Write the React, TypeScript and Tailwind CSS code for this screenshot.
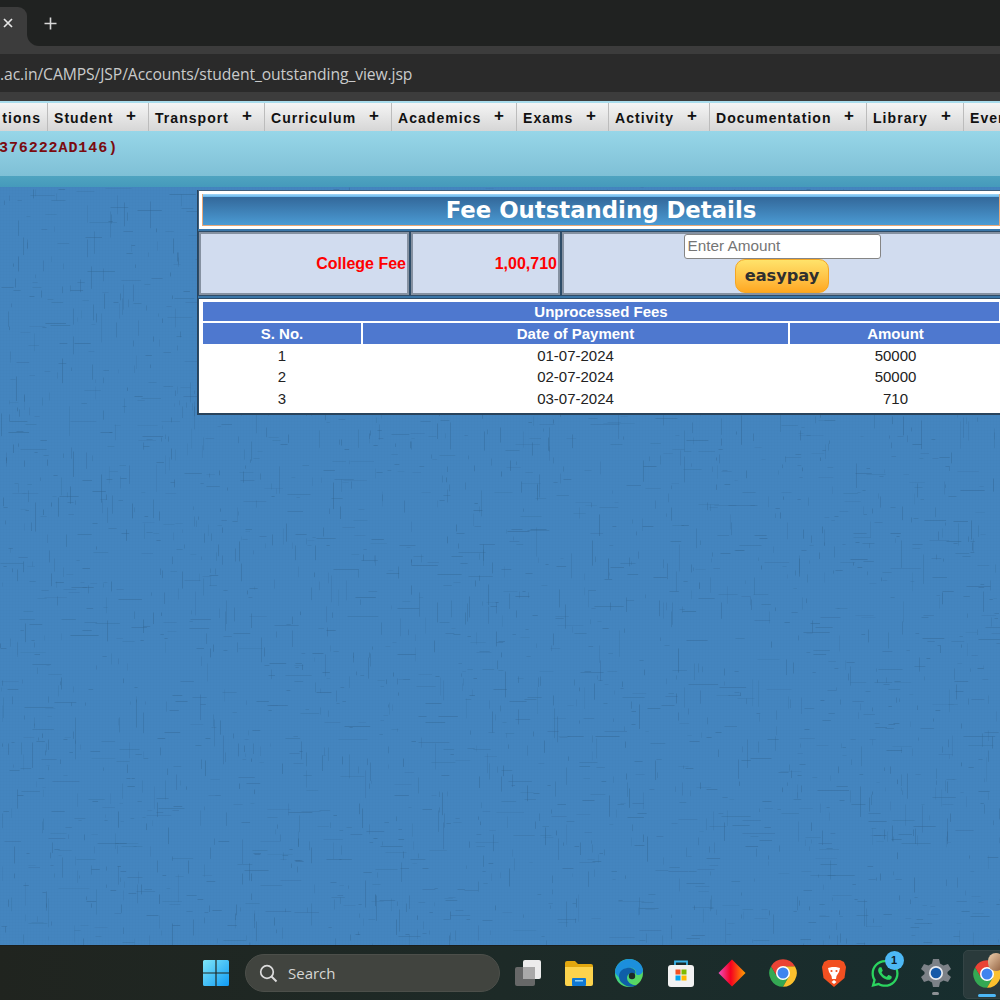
import React from "react";
import { FaWhatsapp } from "react-icons/fa";

const menu: [string, number][] = [
  ["Student", 101],
  ["Transport", 116],
  ["Curriculum", 127],
  ["Academics", 125],
  ["Exams", 92],
  ["Activity", 101],
  ["Documentation", 157],
  ["Library", 97],
];

function Texture() {
  const lines: React.ReactNode[] = [];
  let s = 12345;
  const r = () => {
    s = (s * 1103515245 + 12345) & 0x7fffffff;
    return s / 0x7fffffff;
  };
  for (let i = 0; i < 3200; i++) {
    const x = Math.floor(r() * 1000) + 0.5;
    const y = Math.floor(r() * 760) + 0.5;
    const l = 3 + r() * r() * 30;
    const h = r() > 0.5;
    lines.push(
      <line key={i} x1={x} y1={y} x2={h ? x + l : x} y2={h ? y : y + l} stroke="#30618c" strokeOpacity={0.12 + r() * 0.28} strokeWidth={1} />
    );
  }
  return (
    <svg className="absolute inset-0 w-full h-full" viewBox="0 0 1000 758" preserveAspectRatio="none">
      <defs>
        <pattern id="weave" width="3" height="3" patternUnits="userSpaceOnUse">
          <rect width="1" height="3" fill="#2f6496" fillOpacity="0.04" />
          <rect width="3" height="1" fill="#2f6496" fillOpacity="0.04" />
        </pattern>
      </defs>
      <rect width="1000" height="758" fill="url(#weave)" />
      {lines}
    </svg>
  );
}

function Chrome({ size = 30 }: { size?: number }) {
  return (
    <svg width={size} height={size} viewBox="0 0 24 24">
      <path d="M12 23A11 11 0 0 1 2.47 6.5L7.24 14.75L16.76 14.75Z" fill="#34a853" />
      <path d="M21.53 6.5A11 11 0 0 1 12 23L16.76 14.75L12 6.5Z" fill="#fbc02d" />
      <path d="M2.47 6.5A11 11 0 0 1 21.53 6.5L12 6.5L7.24 14.75Z" fill="#ea4335" />
      <circle cx="12" cy="12" r="5.6" fill="#fff" />
      <circle cx="12" cy="12" r="4.4" fill="#3f84ee" />
    </svg>
  );
}

function TaskItem({ children }: { children: React.ReactNode }) {
  return <div className="w-[51px] h-full flex items-center justify-center shrink-0">{children}</div>;
}

export default function App() {
  return (
    <div className="w-[1000px] h-[1000px] overflow-hidden flex flex-col font-['Liberation_Sans',sans-serif]">
      {/* tab strip */}
      <div className="h-[46px] flex shrink-0 bg-[#202221]">
        <div className="w-[27px] pt-[7px]">
          <div className="h-full bg-[#3c3c3c] rounded-tr-[9px] flex items-start pt-[7px] pl-[1px] text-[#e8e8e8]">
            <svg width="14" height="18" viewBox="0 0 14 18">
              <path d="M3 5L11 13M11 5L3 13" stroke="#e6e6e6" strokeWidth="1.7" />
            </svg>
          </div>
        </div>
        <div className="flex-1 bg-[#3c3c3c]">
          <div className="h-full bg-[#202221] rounded-bl-[12px] flex items-center pl-[17px]">
            <svg width="13" height="13" viewBox="0 0 13 13">
              <path d="M6.5 0.5V12.5M0.5 6.5H12.5" stroke="#d8d8d8" strokeWidth="1.6" />
            </svg>
          </div>
        </div>
      </div>
      <div className="h-[8px] bg-[#3c3c3c] shrink-0" />
      {/* address bar */}
      <div className="h-[38px] bg-[#2a2a2a] shrink-0 flex items-center pt-[3px] text-[15.7px] text-[#c9cacb] font-['Open_Sans',sans-serif] tracking-[-0.1px]">
        .ac.in/CAMPS/JSP/Accounts/student_outstanding_view.jsp
      </div>
      <div className="h-[9px] bg-[#3c3c3c] shrink-0" />

      {/* menu */}
      <div className="h-[30px] shrink-0 pt-[2px] bg-[#a9dcec] flex overflow-hidden">
        <div className="w-[48px] shrink-0 border-r border-[#bcbcbc] bg-gradient-to-b from-[#f5f5f5] to-[#d6d6d6] flex items-center justify-end pr-[6px] text-[14px] font-bold tracking-[1.05px] text-[#111]">
          <span className="mt-[2px]">tions</span>
        </div>
        {menu.map(([label, w]) => (
          <div
            key={label}
            style={{ width: w }}
            className="shrink-0 border-r border-[#bcbcbc] bg-gradient-to-b from-[#f5f5f5] to-[#d6d6d6] flex items-center justify-between pl-[6px] pr-[12px] text-[14px] font-bold tracking-[1.05px] text-[#111]"
          >
            <span className="mt-[2px]">{label}</span>
            <span className="text-[17px] leading-none -mt-[3px] tracking-normal">+</span>
          </div>
        ))}
        <div className="flex-1 bg-gradient-to-b from-[#f5f5f5] to-[#d6d6d6] flex items-center pl-[6px] text-[14px] font-bold tracking-[1.05px] text-[#111] whitespace-nowrap">
          <span className="mt-[2px]">Events</span>
        </div>
      </div>

      {/* student banner */}
      <div className="h-[45px] shrink-0 bg-gradient-to-b from-[#97d6e8] to-[#7fc0d6] pt-[9px] -ml-[1px] font-['Liberation_Mono',monospace] font-bold text-[15px] leading-[17px] tracking-[0.92px] text-[#7b0a0f]">
        376222AD146)
      </div>
      <div className="h-[11px] shrink-0 bg-gradient-to-b from-[#4fa3c0] to-[#459abb]" />

      {/* main */}
      <div className="relative flex-1 bg-[#4485bf] overflow-hidden pl-[197px] pt-[3px]">
        <Texture />
        <div className="relative w-[805px] border-l border-b-2 border-[#28435c] flex flex-col gap-[2px] bg-[#3a76a8]">
          {/* title */}
          <div className="h-[39px] bg-white border-t border-l border-[#3f5f7c] pl-[3px] pr-[2px] pt-[3px] pb-[3px]">
            <div className="h-[32px] border-l border-r border-b border-[#e9a878]">
              <div className="h-[3px] bg-gradient-to-b from-[#a3d8f8] to-[#61b2ea]" />
              <div className="h-[28px] pb-[2px] bg-gradient-to-b from-[#33689a] to-[#4b9bd4] flex items-center justify-center text-white font-bold text-[22.8px] font-['DejaVu_Sans',sans-serif]">
                Fee Outstanding Details
              </div>
            </div>
          </div>
          {/* fee row */}
          <div className="h-[65px] flex gap-[2px] bg-[#2d4c68] pt-[1px] pb-[1px] text-[16px] font-bold text-[#ff0000]">
            <div className="w-[210px] ml-[1px] bg-[#d1dcef] border-2 border-[#8591a1] flex items-center justify-end pr-[1px]">
              College Fee
            </div>
            <div className="w-[149px] bg-[#d1dcef] border-2 border-[#8591a1] flex items-center justify-end pr-[1px]">
              1,00,710
            </div>
            <div className="flex-1 bg-[#d1dcef] border-2 border-l-[#8591a1] border-y-[#8591a1] border-r-0 pr-[2px] flex flex-col items-center">
              <div className="w-[197px] h-[25px] bg-white border border-[#858585] rounded-[3px] flex items-center pl-[3px] text-[15.3px] font-normal text-[#757575]">
                Enter Amount
              </div>
              <div className="w-[94px] h-[35px] rounded-[10px] border border-[#f5a623] bg-gradient-to-b from-[#ffe36a] to-[#ffa81f] flex items-center justify-center text-[#2f2f2f] font-bold text-[16.2px] font-['DejaVu_Sans',sans-serif]">
                easypay
              </div>
            </div>
          </div>
          {/* table */}
          <div className="bg-white border-t border-l border-[#2d4c68] pt-[3px] pl-[4px] pr-[1px] pb-[4px] flex flex-col text-[15px] leading-none text-[#222]">
            <div className="h-[19px] mr-[2px] bg-[#4e78cf] flex items-center justify-center text-white font-bold">
              Unprocessed Fees
            </div>
            <div className="mt-[2px] h-[21px] grid grid-cols-[158px_425px_1fr] gap-[2px] text-white font-bold">
              <div className="bg-[#4e78cf] flex items-center justify-center pb-[1px]">S. No.</div>
              <div className="bg-[#4e78cf] flex items-center justify-center pb-[1px]">Date of Payment</div>
              <div className="bg-[#4e78cf] flex items-center justify-center pb-[1px]">Amount</div>
            </div>
            {[
              ["1", "01-07-2024", "50000", "h-[22px]"],
              ["2", "02-07-2024", "50000", "h-[21px]"],
              ["3", "03-07-2024", "710", "h-[22px]"],
            ].map((row) => (
              <div key={row[0]} className={row[3] + " grid grid-cols-[158px_425px_1fr] gap-[2px] items-center text-center"}>
                <div>{row[0]}</div>
                <div>{row[1]}</div>
                <div>{row[2]}</div>
              </div>
            ))}
          </div>
        </div>
      </div>

      {/* taskbar */}
      <div className="h-[55px] shrink-0 border-t border-[#1a1e1d] bg-gradient-to-r from-[#20241f] via-[#1d2a27] to-[#172e2f] flex items-center pl-[190px]">
        <TaskItem>
          <svg width="28" height="28" viewBox="0 0 28 28">
            <defs>
              <linearGradient id="win" x1="0" y1="0" x2="1" y2="1">
                <stop offset="0" stopColor="#7fe6f8" />
                <stop offset="1" stopColor="#0f9bf5" />
              </linearGradient>
            </defs>
            <path d="M1 2.5A1.5 1.5 0 0 1 2.5 1H13.4V13.4H1ZM14.6 1H25.5A1.5 1.5 0 0 1 27 2.5V13.4H14.6ZM1 14.6H13.4V27H2.5A1.5 1.5 0 0 1 1 25.5ZM14.6 14.6H27V25.5A1.5 1.5 0 0 1 25.5 27H14.6Z" fill="url(#win)" />
          </svg>
        </TaskItem>
        <div className="ml-[4px] mr-[2px] w-[255px] h-[38px] shrink-0 rounded-full bg-[#41443f] border border-[#4c4f4a] flex items-center pl-[13px] gap-[10px] text-[15px] text-[#d6d6d4] font-['Open_Sans',sans-serif]">
          <svg width="19" height="19" viewBox="0 0 19 19" fill="none">
            <circle cx="8" cy="8" r="6.3" stroke="#dcdcdc" strokeWidth="1.7" />
            <path d="M12.5 12.5L17.5 17.5" stroke="#dcdcdc" strokeWidth="1.9" />
          </svg>
          Search
        </div>
        <TaskItem>
          <svg width="28" height="28" viewBox="0 0 28 28">
            <rect x="9" y="1" width="18" height="19" rx="2" fill="#ececec" />
            <rect x="1" y="8" width="20" height="19" rx="2" fill="#6c6c6c" fillOpacity="0.95" />
            <rect x="9" y="8" width="12" height="12" fill="#a9a9a9" />
          </svg>
        </TaskItem>
        <TaskItem>
          <svg width="30" height="26" viewBox="0 0 30 26">
            <path d="M1 3A2 2 0 0 1 3 1H11L14 4H27A2 2 0 0 1 29 6V10H1Z" fill="#e2a70f" />
            <path d="M1 7H29V24A2 2 0 0 1 27 26H3A2 2 0 0 1 1 24Z" fill="#fcd34d" />
            <rect x="8" y="18" width="14" height="8" rx="1" fill="#0f78d4" />
            <rect x="11" y="20" width="8" height="1.5" fill="#8fd0f5" />
          </svg>
        </TaskItem>
        <TaskItem>
          <svg className="-ml-[2px]" width="28" height="28" viewBox="0 0 28 28">
            <defs>
              <linearGradient id="edge" x1="0" y1="0" x2="1" y2="1">
                <stop offset="0" stopColor="#2ed1a8" />
                <stop offset="1" stopColor="#63d94f" />
              </linearGradient>
            </defs>
            <circle cx="14" cy="14" r="14" fill="url(#edge)" />
            <path d="M0 14C0 5 8 0 14 0C21 0 27 4 28 11C28 16 22 17 21 15C22 11 18 8 13 9C7 10 4 15 6 21Z" fill="#1c8fdc" />
            <path d="M7 24C2 20 3 10 12 9C18 8 22 12 20 15C16 13 12 15 12 19C12 23 17 27 22 26C17 29 11 28 7 24Z" fill="#0f5ea8" />
            <circle cx="17" cy="17" r="3.2" fill="#1d2a27" />
          </svg>
        </TaskItem>
        <TaskItem>
          <svg width="28" height="28" viewBox="0 0 28 28" fill="none">
            <path d="M8 7V2.5H20V7" stroke="#39b4ea" strokeWidth="1.8" />
            <rect x="1" y="6" width="26" height="22" rx="3" fill="#f2f2f2" />
            <rect x="8.5" y="10.5" width="5" height="5" fill="#f25022" />
            <rect x="14.5" y="10.5" width="5" height="5" fill="#7fba00" />
            <rect x="8.5" y="16.5" width="5" height="5" fill="#00a4ef" />
            <rect x="14.5" y="16.5" width="5" height="5" fill="#ffb900" />
          </svg>
        </TaskItem>
        <TaskItem>
          <svg width="28" height="28" viewBox="0 0 28 28">
            <defs>
              <linearGradient id="dia" x1="0" y1="0" x2="1" y2="0">
                <stop offset="0" stopColor="#ee4fc0" />
                <stop offset="0.45" stopColor="#f5001f" />
                <stop offset="1" stopColor="#ffa200" />
              </linearGradient>
            </defs>
            <path d="M14 0.5L27.5 14L14 27.5L0.5 14Z" fill="url(#dia)" />
          </svg>
        </TaskItem>
        <TaskItem>
          <Chrome />
        </TaskItem>
        <TaskItem>
          <svg width="24" height="28" viewBox="0 0 24 28">
            <path d="M6 1H18L22 3L24 8L22.5 19L12 28L1.5 19L0 8L2 3Z" fill="#f25021" />
            <path d="M6 9L10 8H14L18 9L17 13L14.5 17L14 20H10L9.5 17L7 13Z" fill="#fff" />
            <path d="M12 21L9.5 23L12 25L14.5 23Z" fill="#fff" />
            <circle cx="9.5" cy="12" r="1.1" fill="#f25021" />
            <circle cx="14.5" cy="12" r="1.1" fill="#f25021" />
          </svg>
        </TaskItem>
        <TaskItem>
          <div className="relative w-[30px] h-[30px] flex items-center justify-center">
            <FaWhatsapp className="text-[#2bd45f]" size={31} />
            <div className="absolute -top-[7px] -right-[4px] w-[19px] h-[19px] rounded-full bg-[#4db8f5] flex items-center justify-center text-[11px] font-bold text-[#10202a]">
              1
            </div>
          </div>
        </TaskItem>
        <TaskItem>
          <div className="relative h-full w-full flex items-center justify-center">
            <svg width="30" height="30" viewBox="0 0 30 30">
              <path d="M12 1H18L19 5.5L22.5 7.5L27 6L30 11L26.5 14V16L30 19L27 24L22.5 22.5L19 24.5L18 29H12L11 24.5L7.5 22.5L3 24L0 19L3.5 16V14L0 11L3 6L7.5 7.5L11 5.5Z" fill="#7c8187" />
              <circle cx="15" cy="15" r="7" fill="#e8ecf1" />
              <circle cx="15" cy="15" r="5.3" fill="#1559a8" />
            </svg>
            <div className="absolute bottom-[5px] w-[7px] h-[3px] rounded-full bg-[#8d9094]" />
          </div>
        </TaskItem>
        <div className="relative ml-[2px] w-[60px] h-[49px] mt-[3px] shrink-0 rounded-[5px] bg-[#2a3a3b] border border-[#344445] flex items-center pl-[8px] pb-[2px]">
          <Chrome />
          <div className="absolute top-[2px] left-[24px] w-[16px] h-[18px] rounded-full bg-gradient-to-br from-[#f1d2b0] to-[#8a5a3a]" />
          <div className="absolute bottom-[1px] left-[14px] w-[18px] h-[3px] rounded-full bg-[#4db8f5]" />
        </div>
      </div>
    </div>
  );
}
